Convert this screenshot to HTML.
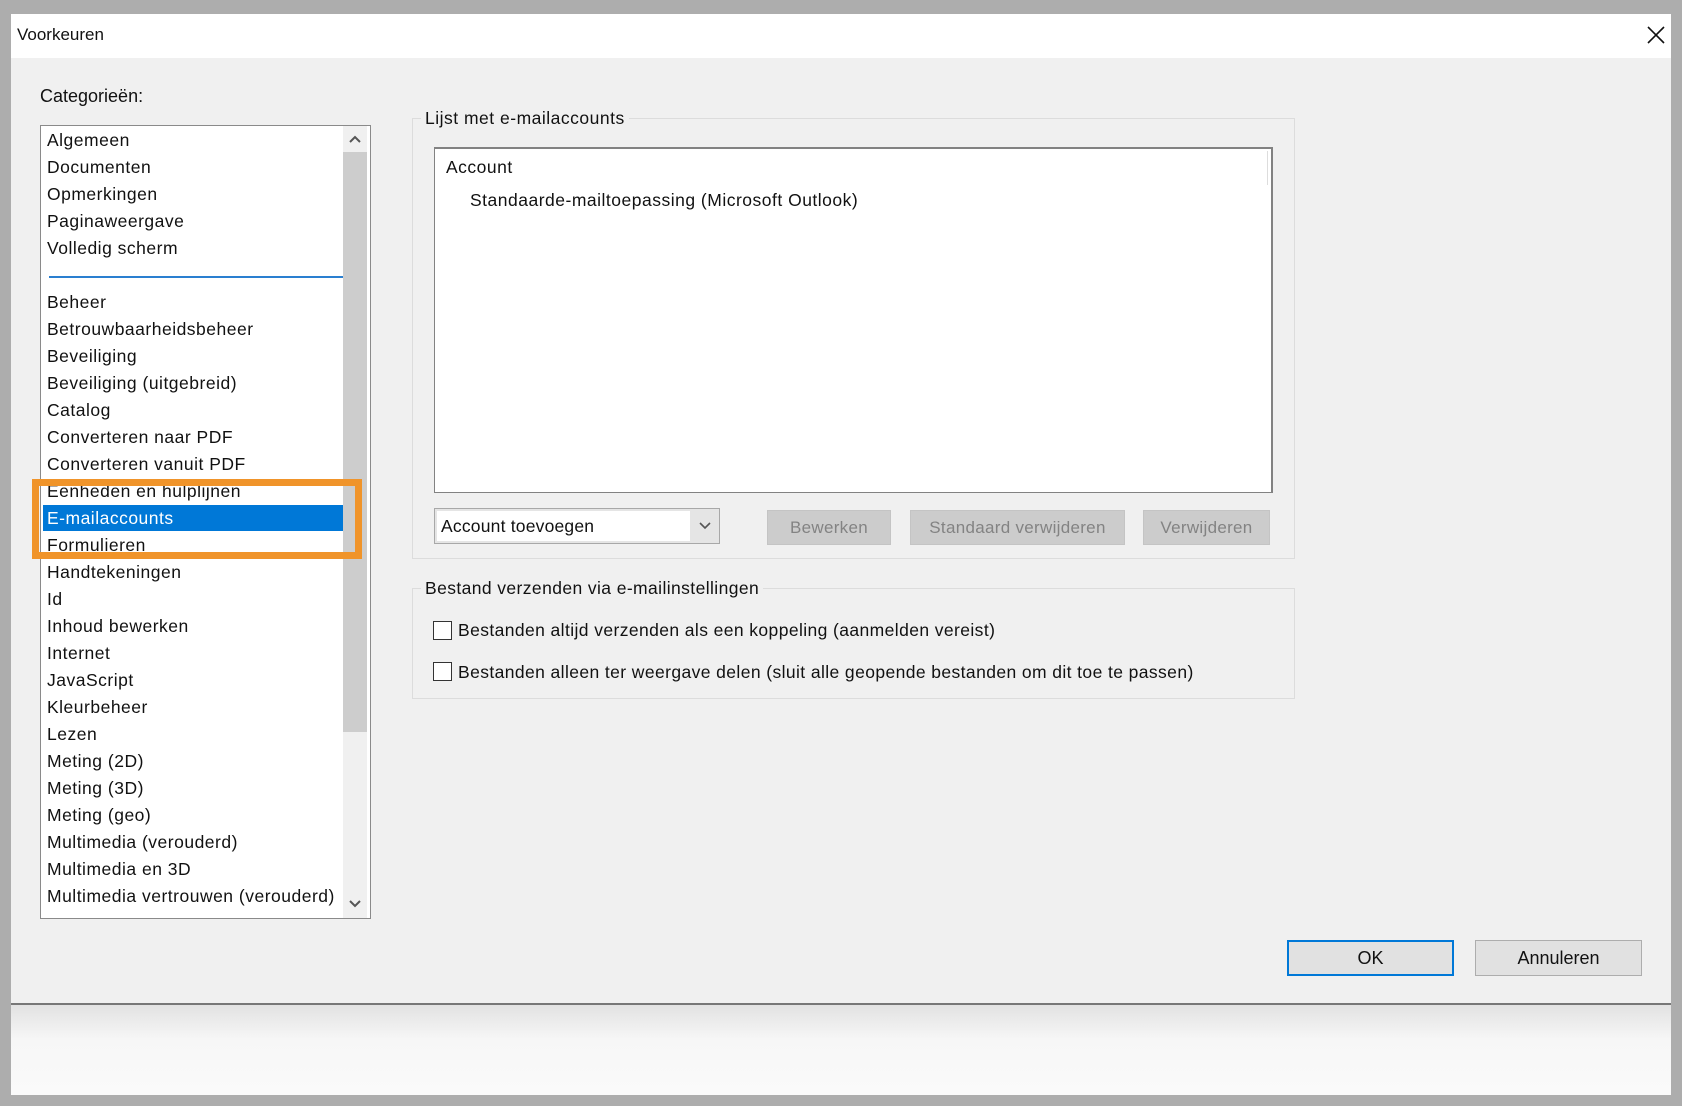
<!DOCTYPE html>
<html><head><meta charset="utf-8"><style>
*{margin:0;padding:0;box-sizing:border-box}
body{width:1682px;height:1106px;background:#adadad;position:relative;overflow:hidden;font-family:"Liberation Sans",Arial,sans-serif;color:#111;font-size:17px}
.a{position:absolute}
.t{position:absolute;white-space:nowrap;line-height:20px}
.item{position:absolute;left:47px;white-space:nowrap;font-size:17.5px;line-height:20px;letter-spacing:0.5px}
.btn{position:absolute;background:#cccccc;border:1px solid #c4c4c4;color:#838383;text-align:center;font-size:17px;line-height:33px;letter-spacing:0.3px}
.cb{position:absolute;width:19px;height:19px;border:1px solid #333;background:#fff}
</style></head><body>
<div class="a" style="left:11px;top:14px;width:1660px;height:990px;background:#f0f0f0"></div>
<div class="a" style="left:11px;top:14px;width:1660px;height:44px;background:#fff"></div>
<div class="t" style="left:17px;top:25px;font-size:17px">Voorkeuren</div>
<svg class="a" style="left:1647px;top:26px" width="18" height="18"><path d="M1 1L17 17M17 1L1 17" stroke="#111" stroke-width="1.6"/></svg>
<div class="a" style="left:11px;top:1003px;width:1660px;height:2px;background:#777"></div>
<div class="a" style="left:11px;top:1005px;width:1660px;height:90px;background:linear-gradient(#e2e2e2,#f7f7f7 40%,#fafafa)"></div>

<div class="t" style="left:40px;top:86px;font-size:18px">Cate<u>g</u>orieën:</div>
<div class="a" style="left:40px;top:125px;width:331px;height:794px;background:#fff;border:1px solid #8a8a8a;overflow:hidden">
 <div class="a" style="left:302px;top:0;width:24px;height:792px;background:#f0f0f0"></div>
 <div class="a" style="left:302px;top:26px;width:24px;height:580px;background:#cdcdcd"></div>
 <svg class="a" style="left:307px;top:8px" width="14" height="10"><path d="M2 8L7 3L12 8" stroke="#555" stroke-width="2" fill="none"/></svg>
 <svg class="a" style="left:307px;top:773px" width="14" height="10"><path d="M2 2L7 7L12 2" stroke="#555" stroke-width="2" fill="none"/></svg>
 <div class="a" style="left:8px;top:150px;width:294px;height:2px;background:#2a7fd0"></div>
 <div class="a" style="left:2px;top:379px;width:300px;height:26px;background:#0078d7"></div>
</div>
<div style="position:absolute;left:0;top:0">
<div class="item" style="top:130px">Algemeen</div>
<div class="item" style="top:157px">Documenten</div>
<div class="item" style="top:184px">Opmerkingen</div>
<div class="item" style="top:211px">Paginaweergave</div>
<div class="item" style="top:238px">Volledig scherm</div>
<div class="item" style="top:292px">Beheer</div>
<div class="item" style="top:319px">Betrouwbaarheidsbeheer</div>
<div class="item" style="top:346px">Beveiliging</div>
<div class="item" style="top:373px">Beveiliging (uitgebreid)</div>
<div class="item" style="top:400px">Catalog</div>
<div class="item" style="top:427px">Converteren naar PDF</div>
<div class="item" style="top:454px">Converteren vanuit PDF</div>
<div class="item" style="top:481px">Eenheden en hulplijnen</div>
<div class="item" style="top:508px;color:#fff">E-mailaccounts</div>
<div class="item" style="top:535px">Formulieren</div>
<div class="item" style="top:562px">Handtekeningen</div>
<div class="item" style="top:589px">Id</div>
<div class="item" style="top:616px">Inhoud bewerken</div>
<div class="item" style="top:643px">Internet</div>
<div class="item" style="top:670px">JavaScript</div>
<div class="item" style="top:697px">Kleurbeheer</div>
<div class="item" style="top:724px">Lezen</div>
<div class="item" style="top:751px">Meting (2D)</div>
<div class="item" style="top:778px">Meting (3D)</div>
<div class="item" style="top:805px">Meting (geo)</div>
<div class="item" style="top:832px">Multimedia (verouderd)</div>
<div class="item" style="top:859px">Multimedia en 3D</div>
<div class="item" style="top:886px">Multimedia vertrouwen (verouderd)</div>
</div>
<div class="a" style="left:41px;top:912px;width:300px;height:6px;background:#fff"></div>
<div class="a" style="left:32px;top:479px;width:330px;height:80px;border:7px solid #f0942a"></div>

<div class="a" style="left:412px;top:118px;width:883px;height:441px;border:1px solid #dcdcdc"></div>
<div class="t" style="left:421px;top:108px;background:#f0f0f0;padding:0 4px;font-size:17.5px;letter-spacing:0.5px">Lijst met e-mailaccounts</div>
<div class="a" style="left:434px;top:147px;width:839px;height:346px;background:#fff;border:1px solid #828282;border-width:2px 2px 1px 1px"></div>
<div class="a" style="left:1267px;top:151px;width:1px;height:34px;background:#ddd"></div>
<div class="t" style="left:446px;top:157px;font-size:17.5px;letter-spacing:0.5px">Account</div>
<div class="t" style="left:470px;top:190px;font-size:17.5px;letter-spacing:0.5px">Standaarde-mailtoepassing (Microsoft Outlook)</div>
<div class="a" style="left:434px;top:508px;width:286px;height:36px;background:#e5e5e5;border:1px solid #a8a8a8"></div>
<div class="a" style="left:437px;top:511px;width:253px;height:30px;background:#fff"></div>
<div class="t" style="left:441px;top:516px;font-size:17.5px;letter-spacing:0.2px">Account toevoegen</div>
<svg class="a" style="left:698px;top:521px" width="14" height="10"><path d="M2 2L7 7L12 2" stroke="#555" stroke-width="1.6" fill="none"/></svg>
<div class="btn" style="left:767px;top:510px;width:124px;height:35px">Bewerken</div>
<div class="btn" style="left:910px;top:510px;width:215px;height:35px">Standaard verwijderen</div>
<div class="btn" style="left:1143px;top:510px;width:127px;height:35px">Verwijderen</div>

<div class="a" style="left:412px;top:588px;width:883px;height:111px;border:1px solid #dcdcdc"></div>
<div class="t" style="left:421px;top:578px;background:#f0f0f0;padding:0 4px;font-size:17.5px;letter-spacing:0.4px">Bestand verzenden via e-mailinstellingen</div>
<div class="cb" style="left:433px;top:621px"></div>
<div class="t" style="left:458px;top:620px;font-size:17.5px;letter-spacing:0.4px">Bestanden altijd verzenden als een koppeling (aanmelden vereist)</div>
<div class="cb" style="left:433px;top:662px"></div>
<div class="t" style="left:458px;top:662px;font-size:17.5px;letter-spacing:0.4px">Bestanden alleen ter weergave delen (sluit alle geopende bestanden om dit toe te passen)</div>

<div class="a" style="left:1287px;top:940px;width:167px;height:36px;background:#e1e1e1;border:2px solid #0078d7;text-align:center;line-height:32px;font-size:18px">OK</div>
<div class="a" style="left:1475px;top:940px;width:167px;height:36px;background:#e1e1e1;border:1px solid #adadad;text-align:center;line-height:34px;font-size:18px">Annuleren</div>
</body></html>
